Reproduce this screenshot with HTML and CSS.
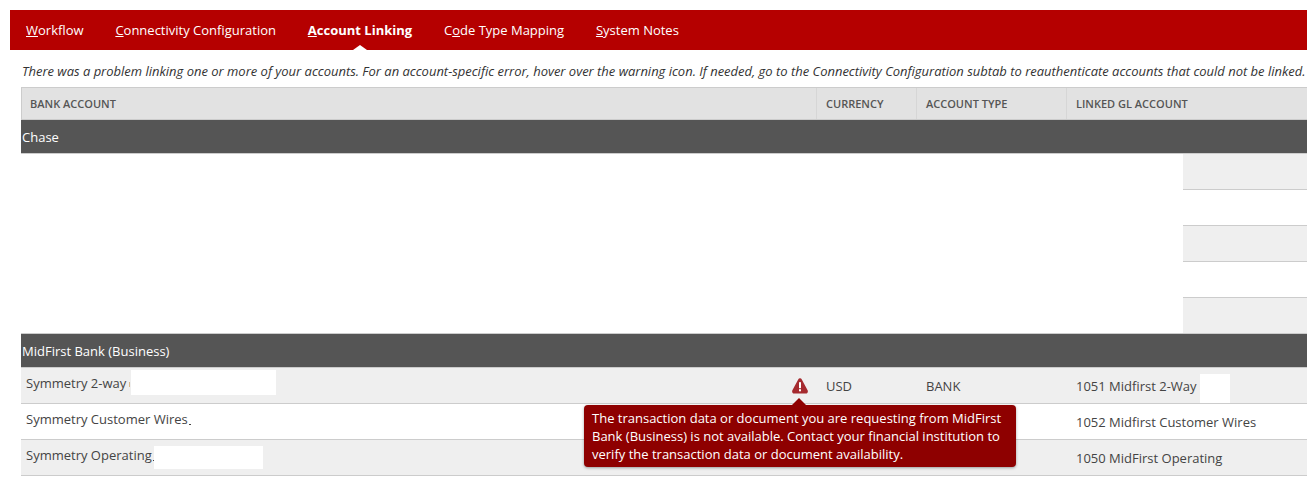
FILE: index.html
```html
<!DOCTYPE html>
<html lang="en">
<head>
<meta charset="utf-8">
<title>Account Linking</title>
<link rel="stylesheet" href="styles.css">
</head>
<body>
<nav class="tabs">
  <a class="tab"><u>W</u>orkflow</a>
  <a class="tab"><u>C</u>onnectivity Configuration</a>
  <a class="tab active"><u>A</u>ccount Linking</a>
  <a class="tab">C<u>o</u>de Type Mapping</a>
  <a class="tab"><u>S</u>ystem Notes</a>
</nav>
<main class="content">
  <p class="notice">There was a problem linking one or more of your accounts. For an account-specific error, hover over the warning icon. If needed, go to the Connectivity Configuration subtab to reauthenticate accounts that could not be linked.</p>
  <section class="table">
    <div class="row head">
      <div class="cell">BANK ACCOUNT</div>
      <div class="cell">CURRENCY</div>
      <div class="cell">ACCOUNT TYPE</div>
      <div class="cell">LINKED GL ACCOUNT</div>
    </div>
    <div class="group">Chase</div>
    <div class="blank shade"></div>
    <div class="blank"></div>
    <div class="blank shade"></div>
    <div class="blank"></div>
    <div class="blank shade last"></div>
    <div class="group second">MidFirst Bank (Business)</div>
    <div class="row data shade">
      <div class="cell account">Symmetry 2-way<span class="sliver"></span><span class="mask mask-a"></span>
        <svg class="warn" viewBox="0 0 16 16" aria-hidden="true"><path d="M8 .3c.8 0 1.400.4 1.800 1.100l5.800 10.900c.8 1.500-.2 3.200-1.800 3.200H2.200C.6 15.500-.4 13.800.4 12.300L6.200 1.400C6.600.7 7.200.3 8 .3z"/><rect class="mark" x="7" y="4.200" width="2" height="6"/><rect class="mark" x="7" y="11.200" width="2" height="2.100"/></svg>
      </div>
      <div class="cell">USD</div>
      <div class="cell">BANK</div>
      <div class="cell gl">1051 Midfirst 2-Way<span class="mask mask-b"></span></div>
    </div>
    <div class="row data">
      <div class="cell account">Symmetry Customer Wires<span class="tick"></span></div>
      <div class="cell"></div>
      <div class="cell"></div>
      <div class="cell gl">1052 Midfirst Customer Wires</div>
    </div>
    <div class="row data shade">
      <div class="cell account">Symmetry Operating<span class="tick"></span><span class="mask mask-c"></span></div>
      <div class="cell"></div>
      <div class="cell"></div>
      <div class="cell gl">1050 MidFirst Operating</div>
    </div>
    <div class="tooltip">The transaction data or document you are requesting from MidFirst Bank (Business) is not available. Contact your financial institution to verify the transaction data or document availability.</div>
  </section>
</main>
</body>
</html>
```
FILE: styles.css
```css
* { box-sizing: border-box; }
html, body { margin: 0; padding: 0; }
body {
  background: #fff;
  color: #444;
  font-family: "Open Sans", "Liberation Sans", sans-serif;
  font-size: 13px;
  padding: 10px 0 0 10px;
  overflow: hidden;
}
.tabs {
  display: flex;
  height: 40px;
  align-items: center;
  background: #b50000;
  padding-left: 16px;
  gap: 31.85px;
}
.tab { position: relative; color: #fff; line-height: 40px; white-space: nowrap; }
.tab.active { font-weight: 700; }
.tab.active::after {
  content: "";
  position: absolute;
  left: 50%;
  bottom: 0;
  margin-left: -7px;
  border: 7px solid transparent;
  border-top: 0;
  border-bottom: 5px solid #fff;
}
.content { padding-left: 11px; }
.notice {
  margin: 0;
  height: 37px;
  padding: 13px 0 0 1px;
  font-style: italic;
  font-size: 12.97px;
  line-height: 17px;
  white-space: nowrap;
  color: #333;
}
.table { position: relative; }
.row {
  display: grid;
  grid-template-columns: 795px 100px 150px 1fr;
}
.head {
  height: 33px;
  grid-template-columns: 794px 100px 150px 1fr;
  background: #e2e2e2;
  border-top: 1px solid #ccc;
  border-left: 1px solid #ccc;
  border-bottom: 1px solid #ccc;
  font-size: 11px;
  font-weight: 600;
  color: #555;
}
.head .cell { padding-left: 9px; line-height: 31px; border-left: 1px solid #d6d6d6; }
.head .cell:first-child { padding-left: 8px; border-left: 0; }
.group {
  height: 34px;
  background: #555;
  border-bottom: 1px solid #ccc;
  color: #fff;
  padding-left: 1px;
  line-height: 34px;
}
.group.second { height: 35px; border-top: 1px solid #ccc; }
.blank {
  height: 36px;
  margin-left: 1162px;
  border-bottom: 1px solid #ccc;
}
.blank.shade { background: #efefef; }
.blank.last { height: 35px; border-bottom: 0; }
.data { height: 36px; border-bottom: 1px solid #ccc; line-height: 37px; }
.data.shade { background: #efefef; }
.cell { position: relative; padding-left: 10px; white-space: nowrap; }
.account { padding-left: 5px; line-height: 31px; }
.mask { position: absolute; background: #fff; }
.mask-a { left: 110px; top: 2px; width: 145px; height: 25px; }
.mask-b { left: 134px; top: 6px; width: 30px; height: 29px; }
.mask-c { left: 133px; top: 6px; width: 109px; height: 23px; }
.tick {
  display: inline-block;
  width: 2px;
  height: 1px;
  margin-left: 1px;
  vertical-align: -1px;
  background: #444;
}
.sliver {
  display: inline-block;
  width: 1px;
  height: 5px;
  margin-left: 3px;
  vertical-align: 1px;
  background: #d9b98c;
}
.warn { position: absolute; left: 771px; top: 10px; width: 16px; height: 16px; }
.warn path { fill: #a52a2f; }
.warn .mark { fill: #fff; }
.tooltip {
  position: absolute;
  left: 563px;
  top: 318px;
  width: 432px;
  height: 62px;
  padding: 4px 8px;
  background: #8e0000;
  color: #fff;
  border-radius: 4px;
  box-shadow: 0 1px 3px rgba(0,0,0,.35);
  line-height: 18px;
}
.tooltip::before {
  content: "";
  position: absolute;
  left: 208px;
  top: -7px;
  border: 7px solid transparent;
  border-top: 0;
  border-bottom: 7px solid #8e0000;
}
```
